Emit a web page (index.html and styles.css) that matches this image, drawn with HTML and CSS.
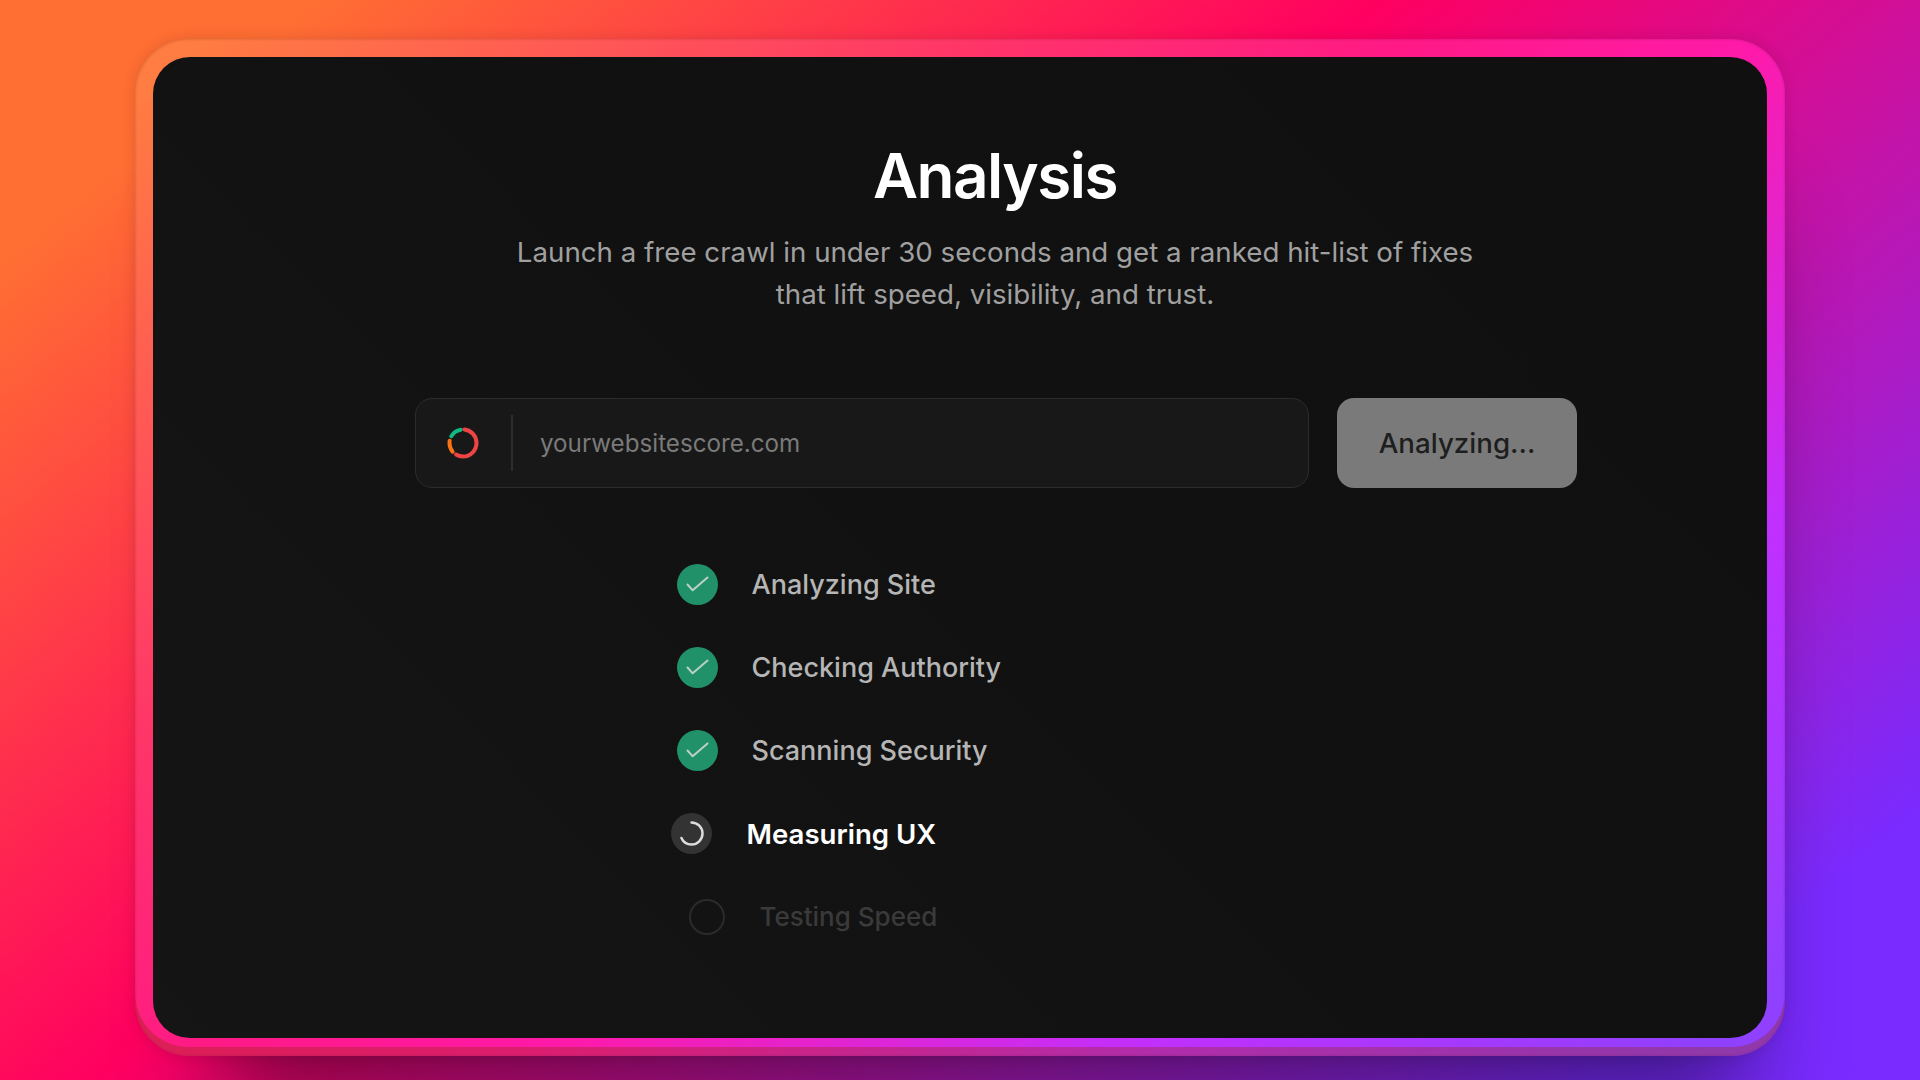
FILE: index.html
```html
<!DOCTYPE html>
<html lang="en">
    <head>
        <meta charset="UTF-8">
        <meta name="viewport" content="width=device-width, initial-scale=1.0">
        <title>Analysis</title>
        <link rel="stylesheet" href="styles.css">
    </head>
    <body>
        <div class="frame">
            <main class="card">
                <h1>Analysis</h1>
                <p class="lead">Launch a free crawl in under 30 seconds and get a ranked hit-list of fixes<br>that lift speed, visibility, and trust.</p>
                <form class="scan-form">
                    <div class="url-box">
                        <span class="url-icon">
                            <svg width="34" height="34" viewBox="0 0 34 34" fill="none" stroke-width="4" stroke-linecap="round">
                                <circle cx="17" cy="17" r="13.5" pathLength="360" transform="rotate(-90 17 17)" stroke="#ef4444" stroke-dasharray="205 360" stroke-dashoffset="-6"/>
                                <circle cx="17" cy="17" r="13.5" pathLength="360" transform="rotate(-90 17 17)" stroke="#f97316" stroke-dasharray="50 360" stroke-dashoffset="-230"/>
                                <circle cx="17" cy="17" r="13.5" pathLength="360" transform="rotate(-90 17 17)" stroke="#10b981" stroke-dasharray="50 360" stroke-dashoffset="-300"/>
                            </svg>
                        </span>
                        <input class="url-input" type="text" placeholder="yourwebsitescore.com">
                    </div>
                    <button class="scan-button" type="button">Analyzing...</button>
                </form>
                <ul class="steps">
                    <li class="step done">
                        <span class="step-icon"><svg width="41" height="41" viewBox="0 0 41 41" fill="none"><path d="M10.5 20.5l5.2 5.8L30.5 13.5" stroke="#bcd0c5" stroke-width="2" stroke-linecap="round" stroke-linejoin="round"/></svg></span>
                        Analyzing Site
                    </li>
                    <li class="step done">
                        <span class="step-icon"><svg width="41" height="41" viewBox="0 0 41 41" fill="none"><path d="M10.5 20.5l5.2 5.8L30.5 13.5" stroke="#bcd0c5" stroke-width="2" stroke-linecap="round" stroke-linejoin="round"/></svg></span>
                        Checking Authority
                    </li>
                    <li class="step done">
                        <span class="step-icon"><svg width="41" height="41" viewBox="0 0 41 41" fill="none"><path d="M10.5 20.5l5.2 5.8L30.5 13.5" stroke="#bcd0c5" stroke-width="2" stroke-linecap="round" stroke-linejoin="round"/></svg></span>
                        Scanning Security
                    </li>
                    <li class="step active">
                        <span class="step-icon"><svg width="41" height="41" viewBox="0 0 41 41" fill="none"><circle cx="20.5" cy="20.5" r="11" pathLength="360" transform="rotate(-90 20.5 20.5)" stroke="#dcdcdc" stroke-width="2.5" stroke-linecap="round" stroke-dasharray="288 360" stroke-dashoffset="42"/></svg></span>
                        Measuring UX
                    </li>
                    <li class="step pending">
                        <span class="step-icon"></span>
                        Testing Speed
                    </li>
                </ul>
            </main>
        </div>
    </body>
</html>
```

FILE: styles.css
```css
*{
    box-sizing: border-box;
}
body{
    margin: 0;
    height: 1080px;
    overflow: hidden;
    padding: 39px 135px 24px;
    font-family: "Inter", "Noto Sans", sans-serif;
    background: linear-gradient(140deg, #ff6e33 10%, #ff0060 43%, #7a2bff 90%);
}
.frame{
    height: 1017px;
    padding: 18px;
    border-radius: 54px;
    background: linear-gradient(140deg, #ff7c42 8%, #ff3568 32%, #ff1a85 45%, #ff1aa8 56%, #c030ff 75%, #9040ff 92%) fixed;
    box-shadow: inset 0 -9px 0 rgba(150, 40, 0, .33), inset 0 0 3px rgba(0, 0, 0, .2), 22px 108px 90px -62px rgba(0, 0, 0, .48), 0 0 14px rgba(0, 0, 0, .12);
}
.card{
    height: 100%;
    padding: 84px 191px 0 261px;
    border-radius: 37px;
    background: linear-gradient(45deg, #151515, #111 50%, #101010);
}
h1{
    margin: 0;
    font-size: 62px;
    line-height: 70px;
    font-weight: 600;
    letter-spacing: -1.5px;
    color: #fff;
    text-align: center;
}
.lead{
    margin: 21px 0 0;
    font-size: 27.7px;
    line-height: 41.5px;
    color: #a0a0a0;
    text-align: center;
}

/*url form*/
.scan-form{
    display: flex;
    gap: 28px;
    margin-top: 83px;
}
.url-box{
    flex: 1;
    display: flex;
    align-items: center;
    height: 90px;
    margin-left: 1px;
    border: 1.5px solid #2c2c2c;
    border-radius: 17px;
    background-color: #181818;
}
.url-icon{
    display: flex;
    align-items: center;
    justify-content: center;
    width: 97px;
    height: 56px;
    padding-right: 2px;
    border-right: 2px solid #2c2c2c;
}
.url-input{
    flex: 1;
    margin-left: 27px;
    padding: 0;
    border: 0;
    outline: 0;
    background: transparent;
    font: inherit;
    font-size: 24.2px;
    color: #fff;
}
.url-input::placeholder{
    color: #7a7a7a;
    opacity: 1;
}
.scan-button{
    width: 240px;
    height: 90px;
    margin-right: -1px;
    border: 0;
    border-radius: 17px;
    background-color: #7a7a7a;
    font: inherit;
    font-size: 27.7px;
    font-weight: 500;
    color: #1e1e1e;
}

/*progress list*/
.steps{
    margin: 55px 0 0;
    padding: 0 0 0 262.5px;
    list-style: none;
}
.step{
    display: flex;
    align-items: center;
    gap: 34px;
    height: 83px;
    font-size: 27px;
    font-weight: 500;
    color: #b5b5b5;
}
.step-icon{
    display: block;
    flex: none;
    width: 41px;
    height: 41px;
    border-radius: 50%;
}
.step-icon svg{
    display: block;
}
.done .step-icon{
    background-color: #21916a;
}
.active{
    margin-left: -6px;
    gap: 35px;
    font-size: 27.6px;
    font-weight: 600;
    color: #fff;
}
.active .step-icon{
    background-color: #333;
}
.pending{
    margin-left: 12px;
    gap: 35px;
    font-size: 26px;
    color: #3a3a3a;
}
.pending .step-icon{
    width: 36px;
    height: 36px;
    border: 2.5px solid #2b2b2b;
}
```
